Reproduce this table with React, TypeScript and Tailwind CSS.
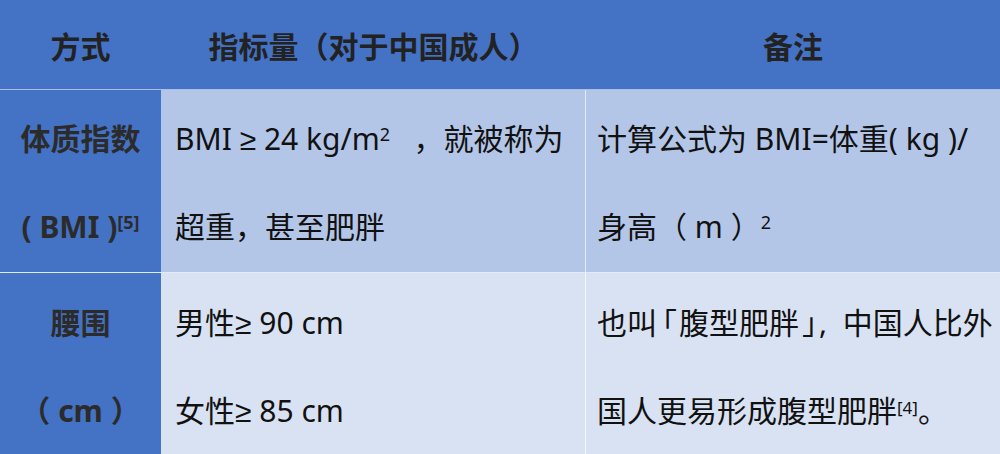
import React from "react";

const font = { fontFamily: '"Noto Sans", "Noto Sans CJK SC", sans-serif' };

function Lines({ lines, className }: { lines: React.ReactNode[]; className?: string }) {
    return (
        <div className={`flex flex-col justify-center ${className ?? ""}`}>
            {lines.map((l, i) => (
                <div key={i} className="h-[88px] flex items-center whitespace-nowrap">{l}</div>
            ))}
        </div>
    );
}

const Ge = () => <span className="font-['Liberation_Sans',sans-serif]">≥</span>;

export default function App() {
    return (
        <div className="w-[1000px] h-[454px] overflow-hidden bg-[#d9e2f3] text-[30px] leading-none" style={font}>
            {/* Header */}
            <div className="grid grid-cols-[161px_425px_1fr] h-[90px] bg-[#4472c4] border-b border-[#a9bfe6] font-bold text-[#222]">
                <div className="flex items-center justify-center pt-[4px]">方式</div>
                <div className="flex items-center justify-center pt-[4px]">指标量（对于中国成人）</div>
                <div className="flex items-center justify-center pt-[4px]">备注</div>
            </div>

            {/* BMI row */}
            <div className="grid grid-cols-[161px_425px_1fr] h-[183px] border-b border-[#e3eaf7]">
                <Lines
                    className="bg-[#4472c4] items-center font-bold text-[#2b2b2b] pt-[4px]"
                    lines={["体质指数", <span>( BMI )<sup className="text-[18px] font-bold">[5]</sup></span>]}
                />
                <Lines
                    className="bg-[#b4c6e7] pl-[14px] text-[#111] border-r border-[#e3eaf7] pt-[4px]"
                    lines={[<span>BMI <Ge />&nbsp;24 kg/m<sup className="text-[18px]">2</sup>&nbsp;&nbsp;&nbsp;，就被称为</span>, "超重，甚至肥胖"]}
                />
                <Lines
                    className="bg-[#b4c6e7] pl-[11px] text-[#111] pt-[4px]"
                    lines={["计算公式为 BMI=体重( kg )/", <span>身高（ m ）<sup className="text-[18px]">2</sup></span>]}
                />
            </div>

            {/* Waist row */}
            <div className="grid grid-cols-[161px_425px_1fr] h-[181px]">
                <Lines
                    className="bg-[#4472c4] items-center font-bold text-[#2b2b2b] pt-[6px]"
                    lines={["腰围", "（ cm ）"]}
                />
                <Lines
                    className="bg-[#d9e2f3] pl-[14px] text-[#111] border-r border-[#f2f5fb] pt-[6px]"
                    lines={[<span>男性<Ge /> 90 cm</span>, <span>女性<Ge /> 85 cm</span>]}
                />
                <Lines
                    className="bg-[#d9e2f3] pl-[11px] text-[#111] pt-[6px]"
                    lines={[
                        <span>
                            也叫<span className="[font-feature-settings:'halt'] ml-[5px] mr-[2px]">「</span>腹型肥胖
                            <span className="[font-feature-settings:'halt'] ml-[3px] mr-[2px]">」</span>,&nbsp;&nbsp;中国人比外
                        </span>,
                        <span>国人更易形成腹型肥胖<sup className="text-[17px]">[4]</sup>。</span>,
                    ]}
                />
            </div>
        </div>
    );
}
